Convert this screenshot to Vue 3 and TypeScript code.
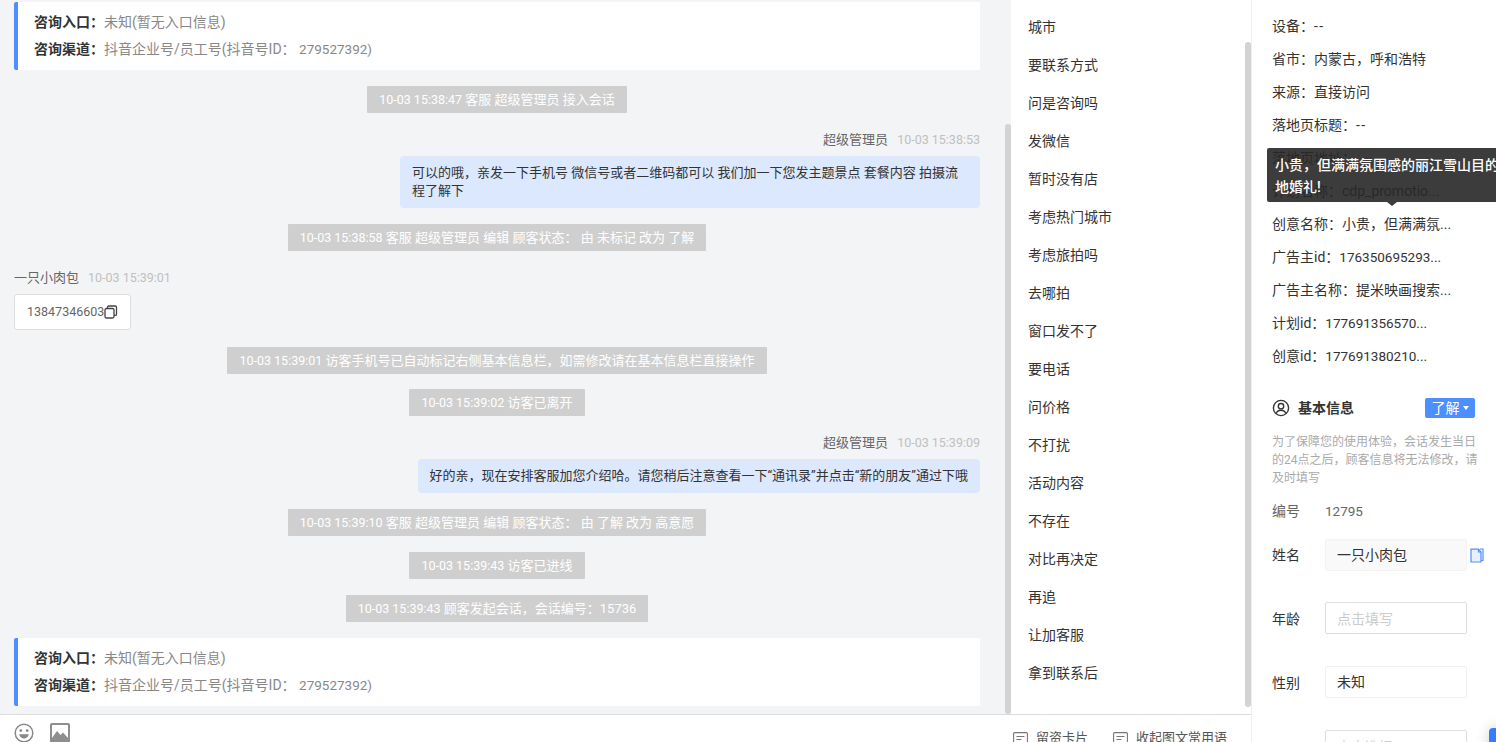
<script setup lang="ts">
const C = '\uFF0C'
const K = '\uFF1A'
type Kind = 'card' | 'notice' | 'out' | 'phone'
interface Item { t: Kind; mt: number; text?: string; time?: string }
const items: Item[] = [
  { t: 'card', mt: 2 },
  { t: 'notice', time: '10-03 15:38:47', text: ' 客服 超级管理员 接入会话', mt: 16 },
  { t: 'out', time: '10-03 15:38:53', text: `可以的哦${C}亲发一下手机号 微信号或者二维码都可以 我们加一下您发主题景点 套餐内容 拍摄流程了解下`, mt: 17 },
  { t: 'notice', time: '10-03 15:38:58', text: ` 客服 超级管理员 编辑 顾客状态${K} 由 未标记 改为 了解`, mt: 16 },
  { t: 'phone', mt: 17 },
  { t: 'notice', time: '10-03 15:39:01', text: ` 访客手机号已自动标记右侧基本信息栏${C}如需修改请在基本信息栏直接操作`, mt: 17 },
  { t: 'notice', time: '10-03 15:39:02', text: ' 访客已离开', mt: 15 },
  { t: 'out', time: '10-03 15:39:09', text: `好的亲${C}现在安排客服加您介绍哈。请您稍后注意查看一下“通讯录”并点击“新的朋友”通过下哦`, mt: 17 },
  { t: 'notice', time: '10-03 15:39:10', text: ` 客服 超级管理员 编辑 顾客状态${K} 由 了解 改为 高意愿`, mt: 16 },
  { t: 'notice', time: '10-03 15:39:43', text: ' 访客已进线', mt: 16 },
  { t: 'notice', time: '10-03 15:39:43', text: ` 顾客发起会话${C}会话编号${K}15736`, mt: 16 },
  { t: 'card', mt: 16 },
]
const entry = `咨询入口${K}`
const channel = `咨询渠道${K}`
const channelValue = `抖音企业号/员工号(抖音号ID${K} `
const phrases = ['城市', '要联系方式', '问是咨询吗', '发微信', '暂时没有店', '考虑热门城市', '考虑旅拍吗', '去哪拍', '窗口发不了', '要电话', '问价格', '不打扰', '活动内容', '不存在', '对比再决定', '再追', '让加客服', '拿到联系后']
const infos: { k: string; v: string; cls?: string }[] = [
  { k: `设备${K}`, v: '--', cls: 'dash' },
  { k: `省市${K}`, v: `内蒙古${C}呼和浩特` },
  { k: `来源${K}`, v: '直接访问' },
  { k: `落地页标题${K}`, v: '--', cls: 'dash' },
  { k: `落地页地址${K}`, v: '' },
  { k: `计划名称${K}`, v: 'cdp_promotio...' },
  { k: `创意名称${K}`, v: `小贵${C}但满满氛...` },
  { k: `广告主id${K}`, v: '176350695293...', cls: 'num' },
  { k: `广告主名称${K}`, v: '提米映画搜索...' },
  { k: `计划id${K}`, v: '177691356570...', cls: 'num' },
  { k: `创意id${K}`, v: '177691380210...', cls: 'num' },
]
const tip = `小贵${C}但满满氛围感的丽江雪山目的地婚礼!`
const desc = `为了保障您的使用体验${C}会话发生当日的24点之后${C}顾客信息将无法修改${C}请及时填写`
</script>

<template>
  <div class="page">
    <div class="main">
      <div class="upper">
        <section class="chat">
          <div class="feed">
            <template v-for="(it, i) in items" :key="i">
              <div v-if="it.t === 'card'" class="card" :style="{ marginTop: it.mt + 'px' }">
                <p><b>{{ entry }}</b><span>未知(暂无入口信息)</span></p>
                <p><b>{{ channel }}</b><span>{{ channelValue }}<em class="num">279527392)</em></span></p>
              </div>
              <div v-else-if="it.t === 'notice'" class="notice-row" :style="{ marginTop: it.mt + 'px' }">
                <span class="notice"><em class="stamp">{{ it.time }}</em>{{ it.text }}</span>
              </div>
              <div v-else-if="it.t === 'out'" class="out" :style="{ marginTop: it.mt + 'px' }">
                <div class="meta"><span class="who">超级管理员</span><span class="time">{{ it.time }}</span></div>
                <div class="bubble">{{ it.text }}</div>
              </div>
              <div v-else class="in" :style="{ marginTop: it.mt + 'px' }">
                <div class="meta"><span class="who">一只小肉包</span><span class="time">10-03 15:39:01</span></div>
                <div class="phone">13847346603
                  <svg width="14" height="14" viewBox="0 0 14 14" fill="none" stroke="#444" stroke-width="1.3">
                    <rect x="1" y="3.5" width="9" height="9.5" rx="1.5" />
                    <path d="M3.5 3.5V2.2C3.5 1.5 4 1 4.7 1h6.6c.7 0 1.2.5 1.2 1.2v7c0 .7-.5 1.2-1.2 1.2H10" />
                  </svg>
                </div>
              </div>
            </template>
          </div>
          <i class="bar bar-chat"></i>
        </section>
        <section class="phrases">
          <div v-for="p in phrases" :key="p" class="phrase">{{ p }}</div>
          <i class="bar bar-phr"></i>
        </section>
      </div>
      <footer class="tools">
        <div class="tools-left">
          <svg width="20" height="20" viewBox="0 0 20 20" fill="none">
            <circle cx="10" cy="10" r="8.8" stroke="#888" stroke-width="1.5" />
            <circle cx="6.8" cy="7.6" r="1.4" fill="#888" />
            <circle cx="13.2" cy="7.6" r="1.4" fill="#888" />
            <path d="M5.2 11.2h9.6c-.4 2.6-2.4 4.2-4.8 4.2s-4.4-1.6-4.8-4.2z" fill="#888" />
          </svg>
          <svg width="20" height="20" viewBox="0 0 20 20">
            <rect x="0" y="0" width="20" height="20" rx="2" fill="#8e8e8e" />
            <rect x="2" y="2" width="16" height="13" fill="#fff" />
            <path d="M2 15l5-7 3.5 4 2.5-2.5 5 5.5v2H2z" fill="#8e8e8e" />
          </svg>
        </div>
        <div class="tools-right">
          <span class="tool">
            <svg width="15" height="13" viewBox="0 0 15 13" fill="none" stroke="#777" stroke-width="1.1">
              <rect x=".6" y=".6" width="13.8" height="11.8" rx="1" />
              <path d="M3.5 4.5h8M3.5 7.5h5" />
            </svg>留资卡片</span>
          <span class="tool">
            <svg width="15" height="13" viewBox="0 0 15 13" fill="none" stroke="#777" stroke-width="1.1">
              <rect x=".6" y=".6" width="13.8" height="11.8" rx="1" />
              <path d="M3.5 4.5h8M3.5 7.5h5" />
            </svg>收起图文常用语</span>
        </div>
      </footer>
    </div>
    <aside class="side">
      <div class="infos">
        <div v-for="n in infos" :key="n.k" class="info">{{ n.k }}<em :class="n.cls">{{ n.v }}</em></div>
      </div>
      <div class="tip">{{ tip }}<i class="tip-arrow"></i></div>
      <div class="sec-head">
        <svg width="18" height="18" viewBox="0 0 18 18" fill="none" stroke="#333" stroke-width="1.4">
          <circle cx="9" cy="9" r="7.6" />
          <circle cx="9" cy="7.2" r="2.7" />
          <path d="M4.2 14.6c.6-2.2 2.5-3.4 4.8-3.4s4.2 1.2 4.8 3.4" />
        </svg>
        <strong>基本信息</strong>
        <span class="tag">了解<i class="caret"></i></span>
      </div>
      <p class="desc">{{ desc }}</p>
      <div class="row no"><label class="grey">编号</label><span class="grey num">12795</span></div>
      <div class="row r-name"><label>姓名</label><div class="field filled">一只小肉包</div>
        <svg class="copy" width="14" height="15" viewBox="0 0 14 15" fill="none" stroke="#4d8ffe" stroke-width="1.2">
          <path d="M1 1.2h7.5L11 4v10H1z" fill="#e8f0ff" />
          <path d="M8.5 1.2V4H11" />
          <path d="M10 1h3v11.5h-2" />
        </svg>
      </div>
      <div class="row r-age"><label>年龄</label><div class="field ph">点击填写</div></div>
      <div class="row r-sex"><label>性别</label><div class="field light">未知</div></div>
      <div class="row r-more"><label></label><div class="field ph">点击选择</div></div>
      <i class="fab"></i>
    </aside>
  </div>
</template>

<style>
html, body { margin: 0; padding: 0; overflow: hidden; background: #fff; }
</style>

<style scoped>
.page {
  display: flex;
  width: 1496px;
  height: 742px;
  overflow: hidden;
  background: #fff;
  color: #333;
  font: 14px/20px Roboto, "Noto Sans CJK SC", sans-serif;
  font-variant-ligatures: none;
}
em { font-style: normal; }
.num { font-size: 13.5px; }
.dash { letter-spacing: 1.5px; }
.main { width: 1251px; flex: none; display: flex; flex-direction: column; border-right: 1px solid #eee; }
.upper { height: 714px; display: flex; flex: none; overflow: hidden; }
.chat { position: relative; width: 1011px; flex: none; background: #f3f4f6; box-sizing: border-box; padding: 0 31px 0 14px; overflow: hidden; }
.phrases { position: relative; flex: 1; padding-top: 8px; }
.phrase { height: 38px; line-height: 38px; padding-left: 17px; color: #333; }
.bar { position: absolute; width: 6px; background: #d3d3d3; border-radius: 3px; }
.bar-chat { right: 0; top: 124px; bottom: 0; }
.bar-phr { right: 0; top: 42px; bottom: 7px; }
.card {
  height: 68px;
  box-sizing: border-box;
  background: #fff;
  border-left: 4px solid #4d8ffe;
  border-radius: 2px;
  padding: 7px 0 0 16px;
}
.card p { margin: 0; height: 27px; line-height: 27px; white-space: nowrap; }
.card b { font-weight: 700; color: #333; }
.card span { color: #888; white-space: pre; }
.notice-row { display: flex; justify-content: center; }
.notice {
  display: block;
  background: #cfcfcf;
  color: #fff;
  font-size: 13px;
  line-height: 27px;
  height: 27px;
  padding: 0 12px;
  border-radius: 1px;
  white-space: nowrap;
}
.stamp { font-size: 12.5px; }
.out { display: flex; flex-direction: column; align-items: flex-end; }
.meta { height: 20px; line-height: 20px; font-size: 13px; white-space: nowrap; margin-bottom: 6px; }
.who { color: #666; }
.time { color: #c0c0c0; font-size: 12.5px; margin-left: 9px; }
.bubble {
  max-width: 556px;
  background: #dce8fd;
  color: #333;
  font-size: 13px;
  line-height: 18px;
  padding: 8px 12px;
  border-radius: 4px;
}
.in { display: flex; flex-direction: column; align-items: flex-start; }
.phone {
  display: flex;
  align-items: center;
  height: 36px;
  box-sizing: border-box;
  padding: 0 12px;
  background: #fff;
  border: 1px solid #ddd;
  border-radius: 3px;
  color: #666;
  font-size: 12.5px;
}
.tools {
  flex: 1;
  display: flex;
  justify-content: space-between;
  border-top: 1px solid #dcdcdc;
  box-sizing: border-box;
  padding: 8px 24px 0 14px;
  overflow: hidden;
}
.tools-left { display: flex; gap: 16px; }
.tools-right { display: flex; gap: 25px; padding-top: 5px; }
.tool { display: flex; gap: 8px; align-items: center; height: 20px; font-size: 13px; color: #555; }
.side { position: relative; flex: 1; padding: 0 0 0 20px; overflow: hidden; }
.infos { padding-top: 10px; }
.info { height: 33px; line-height: 33px; white-space: nowrap; }
.tip {
  position: absolute;
  left: 15px;
  top: 148px;
  height: 54px;
  box-sizing: border-box;
  width: 240px;
  padding: 6px 8px;
  background: rgba(39, 39, 39, 0.9);
  color: #fff;
  line-height: 22px;
  border-radius: 2px;
  font-weight: 500;
}
.tip-arrow {
  position: absolute;
  left: 120px;
  bottom: -4px;
  width: 0;
  height: 0;
  border-left: 5px solid transparent;
  border-right: 5px solid transparent;
  border-top: 4px solid #3c3c3c;
}
.sec-head { display: flex; align-items: center; width: 203px; height: 20px; margin-top: 25px; gap: 8px; }
.sec-head svg { flex: none; }
.sec-head strong { font-weight: 700; font-size: 14px; color: #333; }
.tag {
  margin-left: auto;
  width: 50px;
  height: 20px;
  display: flex;
  align-items: center;
  justify-content: center;
  gap: 3px;
  background: #4d8ffe;
  color: #fff;
  border-radius: 2px;
  font-size: 14px;
}
.caret { width: 0; height: 0; border-left: 3.5px solid transparent; border-right: 3.5px solid transparent; border-top: 4px solid #fff; }
.desc { width: 206px; margin: 15px 0 0; font-size: 12px; line-height: 18px; color: #aaa; }
.row { display: flex; align-items: center; position: relative; }
.row label { width: 53px; flex: none; color: #333; }
.grey, .row label.grey { color: #666; }
.no { height: 20px; margin-top: 14px; }
.field {
  width: 142px;
  height: 32px;
  box-sizing: border-box;
  padding: 0 11px;
  line-height: 30px;
  border-radius: 2px;
  border: 1px solid #ddd;
  color: #333;
}
.filled { background: #f9f9f9; border-color: #f3f3f3; }
.light { border-color: #f0f0f0; }
.ph { color: #ccc; line-height: 32px; }
.r-name { margin-top: 18px; }
.copy { margin-left: 3px; }
.r-age { margin-top: 31px; }
.r-age label, .r-sex label { padding-top: 2px; }
.r-sex { margin-top: 32px; }
.r-more { margin-top: 32px; }
.fab { position: absolute; left: 237px; top: 728px; width: 27px; height: 27px; border-radius: 4px; background: #2f7fff; box-shadow: 0 0 14px rgba(0, 0, 0, 0.18); }
</style>
